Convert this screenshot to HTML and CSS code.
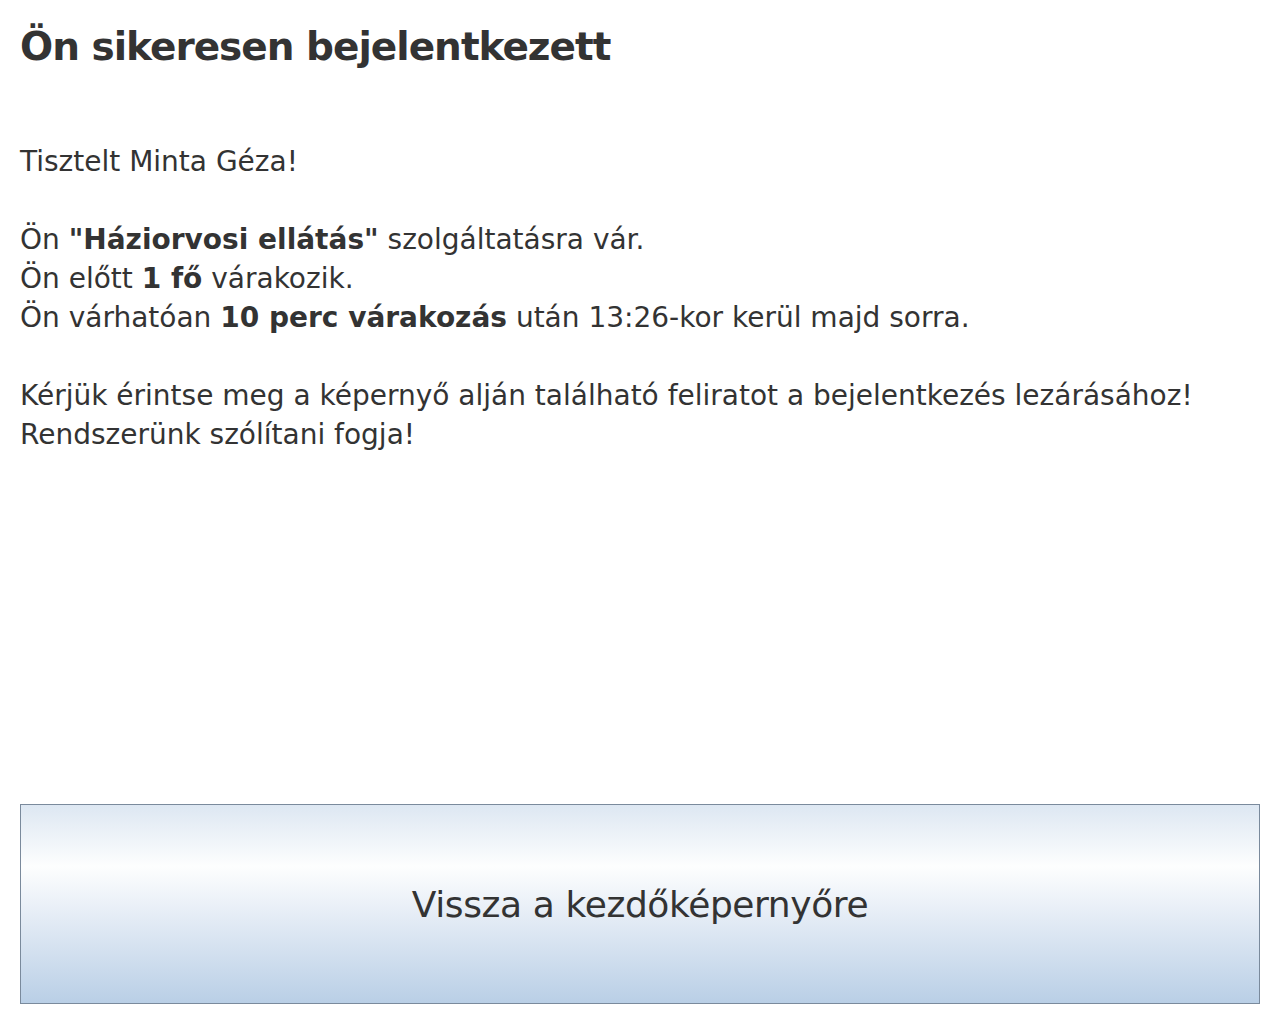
FILE: index.html
```html
<!DOCTYPE html>
<html lang="hu">
<head>
    <meta charset="UTF-8">
    <meta name="viewport" content="width=device-width, initial-scale=1.0">
    <title>Bejelentkezés</title>
    <link rel="stylesheet" href="styles.css">
</head>
<body>
    <div class="page">
        <h1>Ön sikeresen bejelentkezett</h1>

        <div class="message">
            Tisztelt Minta Géza!<br>
            <br>
            Ön <b>"Háziorvosi ellátás"</b> szolgáltatásra vár.<br>
            Ön előtt <b>1 fő</b> várakozik.<br>
            Ön várhatóan <b>10 perc várakozás</b> után 13:26-kor kerül majd sorra.<br>
            <br>
            Kérjük érintse meg a képernyő alján található feliratot a bejelentkezés lezárásához!<br>
            Rendszerünk szólítani fogja!
        </div>

        <!-- Vissza gomb -->
        <a href="index" class="back-button">Vissza a kezdőképernyőre</a>
    </div>
</body>
</html>
```

FILE: styles.css
```css
html, body {
    margin: 0;
    height: 100%;
}
body {
    font-family: "DejaVu Sans", Tahoma, sans-serif;
    color: #333;
    background: #fff;
}

.page {
    display: flex;
    flex-direction: column;
    height: 100%;
    box-sizing: border-box;
    padding: 0 20px 13px 20px;
}

h1 {
    font-size: 39px;
    font-weight: bold;
    letter-spacing: -1px;
    margin: 22px 0 0 0;
    line-height: 50px;
}

.message {
    margin-top: 70px;
    font-size: 28px;
    line-height: 39px;
}

.back-button {
    margin-top: auto;
    display: flex;
    align-items: center;
    justify-content: center;
    height: 198px;
    border: 1px solid #7a8a9c;
    background: linear-gradient(to bottom, #dde7f2 0%, #fdfefe 31%, #e6edf6 55%, #b9cfe6 100%);
    color: #333;
    font-size: 36px;
    letter-spacing: -0.4px;
    text-decoration: none;
}
```
